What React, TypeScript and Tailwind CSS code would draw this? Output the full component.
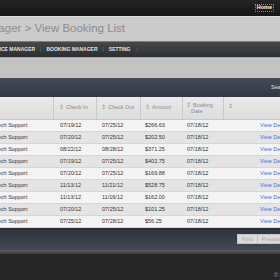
const rows = [
  { checkIn: "07/19/12", checkOut: "07/25/12", amount: "$266.63" },
  { checkIn: "07/20/12", checkOut: "07/25/12", amount: "$202.50" },
  { checkIn: "08/22/12", checkOut: "08/28/12", amount: "$371.25" },
  { checkIn: "07/19/12", checkOut: "07/25/12", amount: "$402.75" },
  { checkIn: "07/20/12", checkOut: "07/25/12", amount: "$169.88" },
  { checkIn: "11/13/12", checkOut: "11/21/12", amount: "$528.75" },
  { checkIn: "11/13/12", checkOut: "11/16/12", amount: "$162.00" },
  { checkIn: "07/20/12", checkOut: "07/25/12", amount: "$101.25" },
  { checkIn: "07/25/12", checkOut: "07/28/12", amount: "$56.25" },
];

function Sort() {
  return <span className="mr-[2px] text-[#9a9a9a]">⇕</span>;
}

export default function App() {
  return (
    <div className="w-[280px] h-[280px] overflow-hidden bg-[#262626] font-['Liberation_Sans',Arial,sans-serif]">
      {/* Top bar */}
      <div className="h-[16px] bg-gradient-to-b from-[#242424] to-[#161616] flex items-center justify-end pr-[6px]">
        <span className="text-[5.5px] font-bold text-white border border-dotted border-[#888] px-[1px] leading-none">
          Home
        </span>
      </div>

      {/* Title */}
      <div className="h-[25px] bg-[#cbcbcb] border-t border-[#dedede] flex items-center whitespace-nowrap">
        <span className="-ml-[24px] text-[11.5px] text-[#8d8d8d]">
          Manager &gt; View Booking List
        </span>
      </div>

      {/* Nav */}
      <div className="h-[16px] bg-gradient-to-b from-[#45494c] to-[#2b2f31] border-t border-[#7c7f80] flex items-center whitespace-nowrap text-[5px] font-bold text-[#e2e2e2]">
        <span className="-ml-[14px]">SERVICE MANAGER</span>
        <span className="mx-[5px] text-[#6f7375] font-normal">|</span>
        <span>BOOKING MANAGER</span>
        <span className="mx-[5px] text-[#6f7375] font-normal">|</span>
        <span>SETTING</span>
        <span className="ml-[6px] text-[#6f7375] font-normal">|</span>
      </div>

      {/* Gap band */}
      <div className="h-[21px] bg-[#c3c3c3] border-t border-[#a9a9a9]" />

      {/* Table panel header */}
      <div className="h-[19px] bg-gradient-to-b from-[#444a56] to-[#323843] flex items-center justify-end whitespace-nowrap">
        <span className="text-[5.5px] text-[#e4e4e4] -mr-[10px]">Search:</span>
      </div>

      {/* Table header */}
      <div className="h-[23px] bg-gradient-to-b from-[#eaeaea] to-[#dcdcdc] border-b border-[#c9c9c9] flex text-[5.5px] text-[#8a8a8a] whitespace-nowrap">
        <div className="w-[54px] shrink-0 border-r border-[#c9c9c9]" />
        <div className="w-[43px] shrink-0 border-r border-[#c9c9c9] pl-[5px] pt-[6px]">
          <Sort />Check In
        </div>
        <div className="w-[44px] shrink-0 border-r border-[#c9c9c9] pl-[4px] pt-[6px]">
          <Sort />Check Out
        </div>
        <div className="w-[42px] shrink-0 border-r border-[#c9c9c9] pl-[4px] pt-[6px]">
          <Sort />Amount
        </div>
        <div className="w-[41px] shrink-0 border-r border-[#c9c9c9] pl-[3px] pt-[5px] leading-[6px]">
          <Sort />Booking
          <div className="pl-[5px]">Date</div>
        </div>
        <div className="flex-1 pl-[4px] pt-[5px]">
          <Sort />
        </div>
      </div>

      {/* Rows */}
      <div className="text-[5.5px] text-[#333]">
        {rows.map((r, i) => (
          <div
            key={i}
            className={`h-[12px] flex items-center overflow-hidden whitespace-nowrap border-b border-[#d6d6d6] ${
              i % 2 === 0 ? "bg-[#f4f4f4]" : "bg-[#e4e4e4]"
            }`}
          >
            <div className="w-[54px] shrink-0 overflow-hidden">
              <span className="-ml-[5px] inline-block">Tech Support</span>
            </div>
            <div className="w-[43px] shrink-0 pl-[6px]">{r.checkIn}</div>
            <div className="w-[44px] shrink-0 pl-[5px]">{r.checkOut}</div>
            <div className="w-[42px] shrink-0 pl-[4px]">{r.amount}</div>
            <div className="w-[41px] shrink-0 pl-[4px]">07/18/12</div>
            <div className="shrink-0 pl-[36px] text-[#4a6ad6]">View Details</div>
          </div>
        ))}
      </div>

      {/* Footer */}
      <div className="h-[22px] bg-gradient-to-b from-[#2b3038] to-[#444b59] flex items-center justify-start pl-[237px] whitespace-nowrap">
        <div className="flex h-[10px] text-[5.5px] text-[#a9a9a9]">
          <span className="bg-[#dadada] border border-[#c4c4c4] px-[4px] flex items-center">First</span>
          <span className="bg-[#dadada] border border-l-0 border-[#c4c4c4] px-[4px] flex items-center">Previous</span>
        </div>
      </div>

      {/* Bottom */}
      <div className="h-[4px] bg-gradient-to-b from-[#5e5e5e] to-[#3a3a3a]" />
      <div className="pt-[6px] pl-[274px] whitespace-nowrap">
        <span className="text-[5.5px] text-[#aaa]">© 2012 Booking</span>
      </div>
    </div>
  );
}
